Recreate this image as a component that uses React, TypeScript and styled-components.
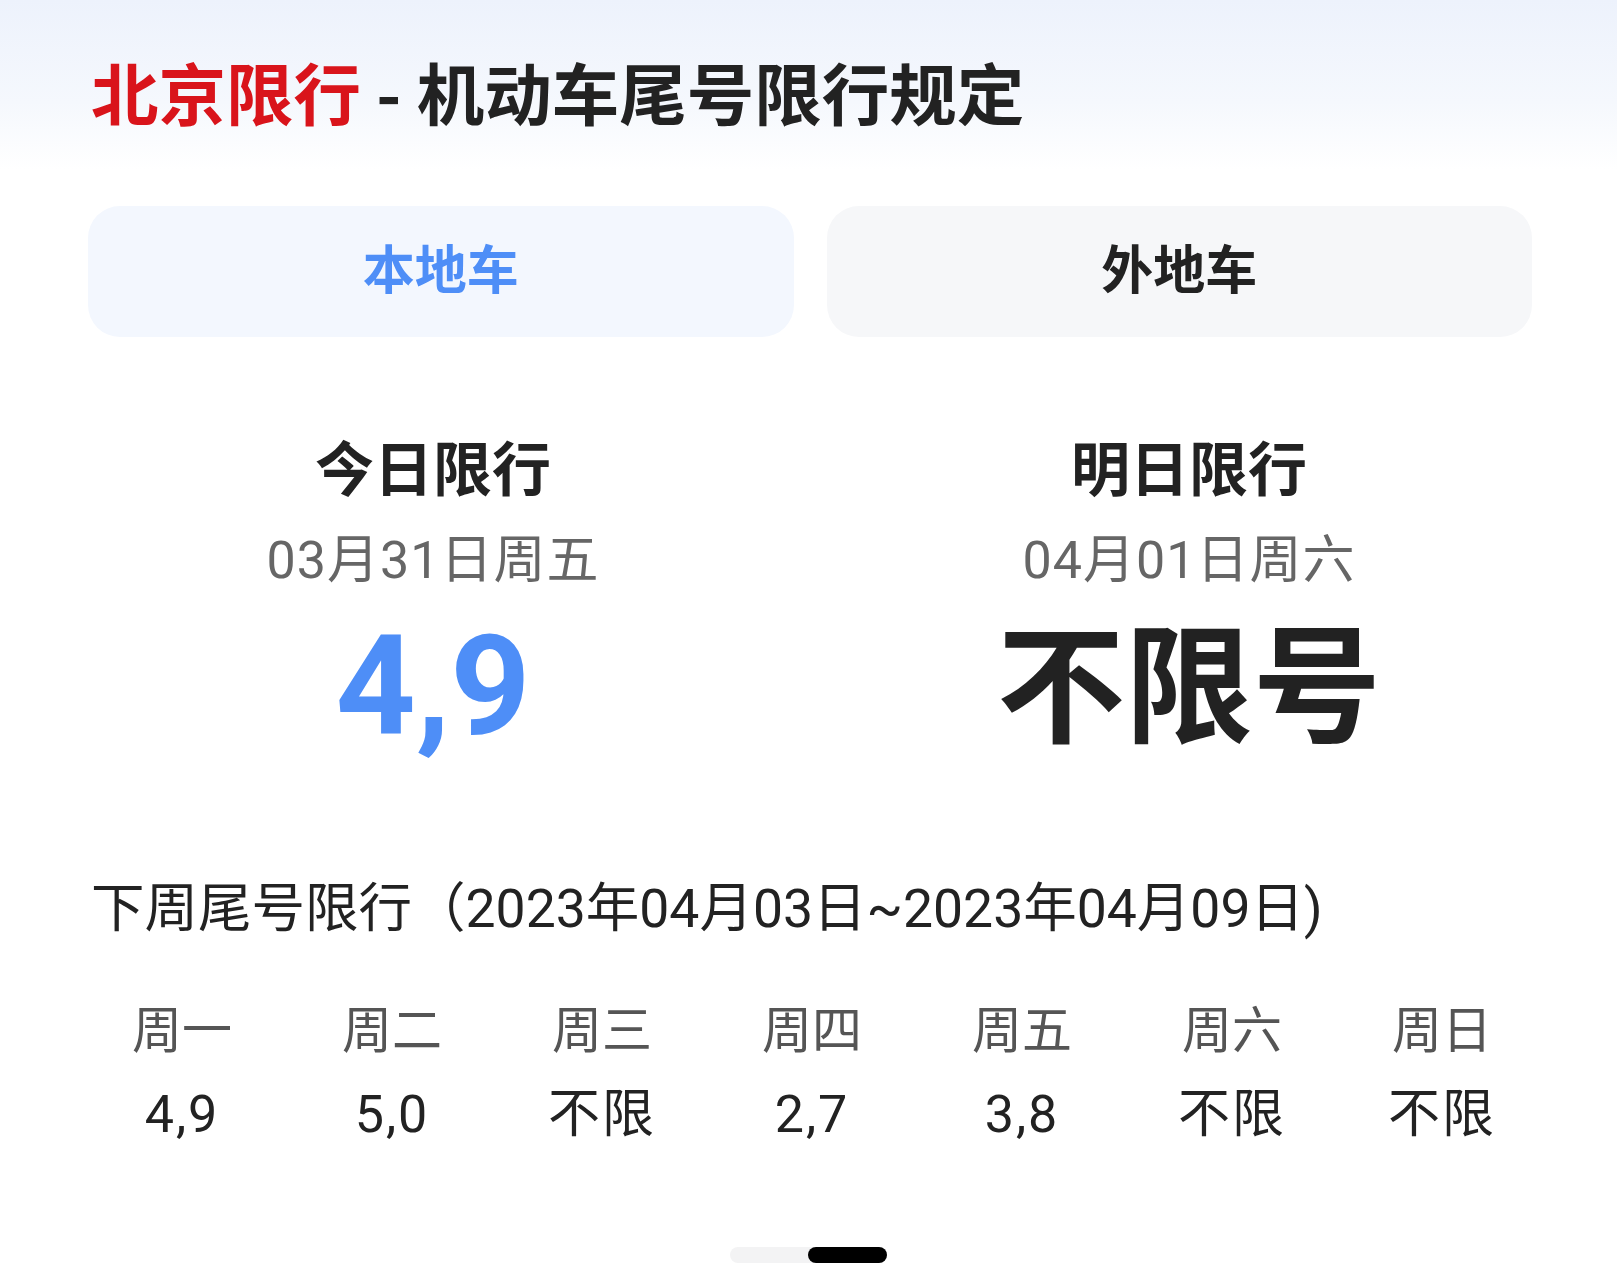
import React from "react";
import styled, { createGlobalStyle } from "styled-components";

const GlobalStyle = createGlobalStyle`
  html, body {
    margin: 0;
    padding: 0;
    background: #ffffff;
  }
  body {
    font-family: "Noto Sans CJK SC", "Noto Sans", sans-serif;
    color: #222222;
  }
`;

const CJK = `"Noto Sans CJK SC", "Noto Sans", sans-serif`;
const MIXED = `Roboto, "Noto Sans CJK SC", sans-serif`;

const Page = styled.div`
  width: 1617px;
  min-height: 1280px;
  display: flex;
  flex-direction: column;
`;

const Header = styled.header`
  height: 170px;
  box-sizing: border-box;
  padding: 57px 91px 0;
  background: linear-gradient(180deg, #edf2fc 0%, #f5f8fd 60%, #ffffff 100%);
`;

const Title = styled.h1`
  margin: 0;
  font-family: ${CJK};
  font-size: 67.5px;
  line-height: 68px;
  font-weight: 700;
  color: #222222;
  white-space: nowrap;
`;

const City = styled.span`
  color: #d9141b;
`;

const Tabs = styled.nav`
  display: grid;
  grid-template-columns: 1fr 1fr;
  gap: 33px;
  margin: 36px 85px 0 88px;
`;

const Tab = styled.button<{ active?: boolean }>`
  height: 131px;
  padding: 0 0 10px;
  border: none;
  border-radius: 32px;
  background: ${({ active }) => (active ? "#f3f7fe" : "#f6f7f9")};
  color: ${({ active }) => (active ? "#4e8ef7" : "#222222")};
  font-family: ${CJK};
  font-size: 52px;
  font-weight: 700;
  cursor: pointer;
`;

const Today = styled.section`
  display: grid;
  grid-template-columns: 1fr 1fr;
  margin: 99px 50px 0 55px;
`;

const DayColumn = styled.div`
  display: flex;
  flex-direction: column;
  align-items: center;
`;

const DayTitle = styled.div`
  font-family: ${CJK};
  font-size: 59px;
  line-height: 59px;
  font-weight: 700;
  color: #222222;
`;

const DayDate = styled.div`
  margin-top: 40px;
  font-family: ${MIXED};
  font-size: 52px;
  line-height: 52px;
  color: #666666;
  letter-spacing: 1px;
`;

const DayValue = styled.div<{ limited?: boolean }>`
  margin-top: 29px;
  height: 140px;
  font-family: ${({ limited }) => (limited ? MIXED : CJK)};
  font-size: ${({ limited }) => (limited ? "140px" : "128px")};
  line-height: ${({ limited }) => (limited ? "140px" : "124px")};
  font-weight: 700;
  color: ${({ limited }) => (limited ? "#4e8ef7" : "#222222")};
`;

const WeekTitle = styled.h2`
  margin: 126px 0 0 91px;
  font-family: ${MIXED};
  font-size: 53.5px;
  line-height: 53px;
  font-weight: 400;
  color: #222222;
  white-space: nowrap;
`;

const WeekGrid = styled.div`
  display: grid;
  grid-template-columns: repeat(7, 210px);
  margin: 66px 0 0 77px;
`;

const WeekCell = styled.div`
  display: flex;
  flex-direction: column;
  align-items: center;
`;

const WeekDay = styled.div`
  font-family: ${CJK};
  font-size: 50px;
  line-height: 50px;
  color: #555555;
`;

const WeekValue = styled.div`
  margin-top: 38px;
  font-family: ${MIXED};
  font-size: 52px;
  line-height: 52px;
  letter-spacing: 2px;
  color: #222222;
`;

const Indicator = styled.div`
  display: flex;
  margin: 106px auto 0;
  width: 157px;
  height: 16px;
  border-radius: 8px;
  background: #f3f3f4;
  justify-content: flex-end;
`;

const IndicatorThumb = styled.div`
  width: 79px;
  height: 16px;
  border-radius: 8px;
  background: #000000;
`;

const days = [
  { title: "今日限行", date: "03月31日周五", value: "4,9", limited: true },
  { title: "明日限行", date: "04月01日周六", value: "不限号", limited: false },
];

const week = [
  { day: "周一", value: "4,9" },
  { day: "周二", value: "5,0" },
  { day: "周三", value: "不限" },
  { day: "周四", value: "2,7" },
  { day: "周五", value: "3,8" },
  { day: "周六", value: "不限" },
  { day: "周日", value: "不限" },
];

export default function App() {
  return (
    <>
      <GlobalStyle />
      <Page>
        <Header>
          <Title>
            <City>北京限行</City> - 机动车尾号限行规定
          </Title>
        </Header>
        <Tabs>
          <Tab active>本地车</Tab>
          <Tab>外地车</Tab>
        </Tabs>
        <Today>
          {days.map((d) => (
            <DayColumn key={d.title}>
              <DayTitle>{d.title}</DayTitle>
              <DayDate>{d.date}</DayDate>
              <DayValue limited={d.limited}>{d.value}</DayValue>
            </DayColumn>
          ))}
        </Today>
        <WeekTitle>下周尾号限行（2023年04月03日~2023年04月09日)</WeekTitle>
        <WeekGrid>
          {week.map((w) => (
            <WeekCell key={w.day}>
              <WeekDay>{w.day}</WeekDay>
              <WeekValue>{w.value}</WeekValue>
            </WeekCell>
          ))}
        </WeekGrid>
        <Indicator>
          <IndicatorThumb />
        </Indicator>
      </Page>
    </>
  );
}
